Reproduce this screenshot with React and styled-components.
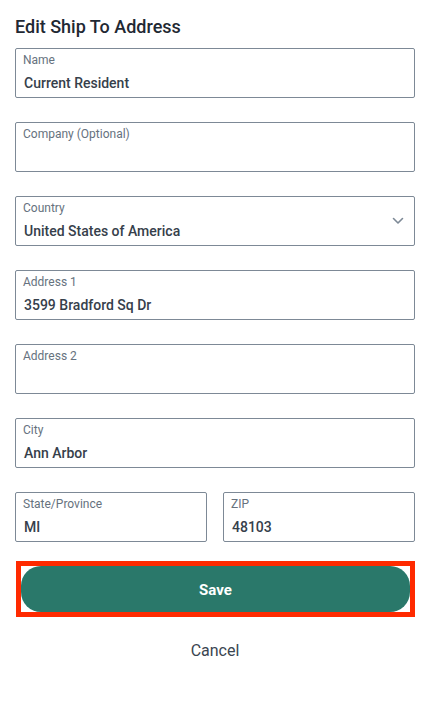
import React from "react";
import styled, { createGlobalStyle } from "styled-components";

const Global = createGlobalStyle`
  html, body { margin: 0; padding: 0; background: #fff; }
  body { font-family: Roboto, "Noto Sans", Arial, sans-serif; -webkit-font-smoothing: antialiased; }
  * { box-sizing: border-box; }
`;

const Page = styled.div`
  width: 422px;
  padding: 16px 7px 0 15px;
  display: flex;
  flex-direction: column;
`;

const Title = styled.h1`
  margin: 0 0 10px;
  font-size: 18px;
  line-height: 22px;
  font-weight: 500;
  color: #1f2933;
`;

const Fields = styled.div`
  display: flex;
  flex-direction: column;
  gap: 24px;
`;

const Row = styled.div`
  display: flex;
  gap: 16px;
`;

const Field = styled.div`
  position: relative;
  flex: ${(p) => (p.$grow ? "1 1 0" : "none")};
  height: 50px;
  border: 1px solid #7d8996;
  border-radius: 2px;
  padding: 3px 30px 0 7px;
  display: flex;
  flex-direction: column;
`;

const Label = styled.div`
  font-size: 12px;
  line-height: 16px;
  color: #66727e;
`;

const Value = styled.div`
  margin-top: 5px;
  padding-left: 1px;
  font-size: 14px;
  line-height: 20px;
  font-weight: 500;
  color: #36404b;
  white-space: nowrap;
`;

const Chevron = styled.svg`
  position: absolute;
  right: 10px;
  top: 20px;
`;

const Highlight = styled.div`
  position: relative;
  margin: 19px 0 0 1px;
  width: 399px;
  height: 56px;
  flex: none;
  border: 5px solid #ff2a00;
  background: #fff;
  display: flex;
  &::before {
    content: "";
    position: absolute;
    left: -6px;
    top: 3px;
    width: 6px;
    height: 40px;
    border-radius: 20px 0 0 20px;
    background: #8aa8a0;
    opacity: 0.5;
    z-index: -1;
  }
`;

const SaveButton = styled.button`
  flex: 1;
  border: none;
  border-radius: 20px;
  background: #2a786a;
  color: #fff;
  font-family: Roboto, Arial, sans-serif;
  font-size: 15px;
  font-weight: 700;
  cursor: pointer;
  padding: 1px 0 0;
`;

const Cancel = styled.button`
  margin: 24px auto 0;
  border: none;
  background: none;
  font-family: Roboto, Arial, sans-serif;
  font-size: 16px;
  line-height: 20px;
  color: #3a4550;
  padding: 0;
  cursor: pointer;
`;

const F = ({ label, value, select, grow }) => (
  <Field $grow={grow}>
    <Label>{label}</Label>
    <Value>{value}</Value>
    {select && (
      <Chevron width="12" height="8" viewBox="0 0 12 8">
        <path d="M1.5 1.5 L6 6 L10.5 1.5" fill="none" stroke="#7d8996" strokeWidth="1.6" strokeLinecap="round" strokeLinejoin="round" />
      </Chevron>
    )}
  </Field>
);

export default function App() {
  return (
    <Page>
      <Global />
      <Title>Edit Ship To Address</Title>
      <Fields>
        <F label="Name" value="Current Resident" />
        <F label="Company (Optional)" value="" />
        <F label="Country" value="United States of America" select />
        <F label="Address 1" value="3599 Bradford Sq Dr" />
        <F label="Address 2" value="" />
        <F label="City" value="Ann Arbor" />
        <Row>
          <F label="State/Province" value="MI" grow />
          <F label="ZIP" value="48103" grow />
        </Row>
      </Fields>
      <Highlight>
        <SaveButton>Save</SaveButton>
      </Highlight>
      <Cancel>Cancel</Cancel>
    </Page>
  );
}
